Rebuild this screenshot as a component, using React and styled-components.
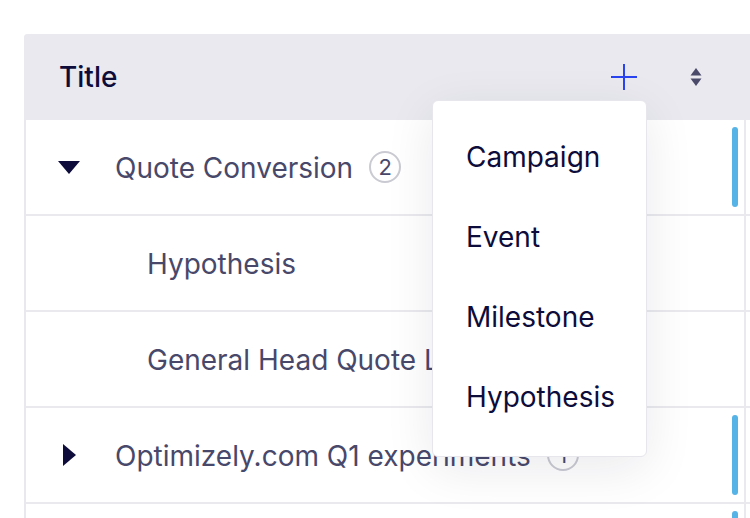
import React from "react";
import styled, { createGlobalStyle } from "styled-components";

const GlobalStyle = createGlobalStyle`
  html, body {
    margin: 0;
    padding: 0;
    background: #ffffff;
    overflow: hidden;
  }
  body {
    font-family: Inter, "Noto Sans", "Liberation Sans", sans-serif;
  }
`;

const rows = [
  { title: "Quote Conversion", count: 2, open: true, bar: true },
  { title: "Hypothesis", child: true },
  { title: "General Head Quote Lines", child: true },
  { title: "Optimizely.com Q1 experiments", count: 1, open: false, bar: true },
  { title: "", bar: true },
];

const menuItems = ["Campaign", "Event", "Milestone", "Hypothesis"];

const App = () => {
  return (
    <>
      <GlobalStyle />
      <Page>
        <Table>
          <HeaderRow>
            <HeaderTitleCell>
              <HeaderLabel>Title</HeaderLabel>
              <HeaderActions>
                <AddWrap>
                  <IconButton aria-label="Add">
                    <svg width="26" height="26" viewBox="0 0 26 26">
                      <path d="M13 0v26M0 13h26" stroke="#2b44f2" strokeWidth="2" fill="none" />
                    </svg>
                  </IconButton>
                  <Menu>
                    {menuItems.map((item) => (
                      <MenuItem key={item}>{item}</MenuItem>
                    ))}
                  </Menu>
                </AddWrap>
                <SortIcon aria-label="Sort">
                  <svg width="12" height="20" viewBox="0 0 12 20">
                    <path d="M6 1L11.5 8.5H0.5Z" fill="#4b4a6b" />
                    <path d="M6 19L11.5 11.5H0.5Z" fill="#4b4a6b" />
                  </svg>
                </SortIcon>
              </HeaderActions>
            </HeaderTitleCell>
            <HeaderRest />
          </HeaderRow>

          {rows.map((row, i) => (
            <Row key={i}>
              <TitleCell $child={row.child}>
                {!row.child && row.title && (
                  <Caret>
                    {row.open ? (
                      <svg width="22" height="13" viewBox="0 0 22 13">
                        <path d="M0 0H22L11 13Z" fill="#0d0c3a" />
                      </svg>
                    ) : (
                      <svg width="13" height="22" viewBox="0 0 13 22">
                        <path d="M0 0V22L13 11Z" fill="#0d0c3a" />
                      </svg>
                    )}
                  </Caret>
                )}
                <RowText>{row.title}</RowText>
                {row.count && <Badge>{row.count}</Badge>}
                <Spacer />
                {row.bar && <StatusBar />}
              </TitleCell>
              <RestCell />
            </Row>
          ))}
        </Table>
      </Page>
    </>
  );
};

export default App;

const Page = styled.div`
  padding: 34px 0 0 24px;
  width: 780px;
  height: 518px;
  box-sizing: border-box;
`;

const Table = styled.div`
  display: flex;
  flex-direction: column;
  border-left: 2px solid #e8e8ee;
  border-top-left-radius: 4px;
`;

const HeaderRow = styled.div`
  display: flex;
  flex-shrink: 0;
  height: 86px;
  margin-left: -2px;
  padding-left: 2px;
  background: #e9e9ef;
  border-top-left-radius: 4px;
`;

const HeaderTitleCell = styled.div`
  width: 720px;
  display: flex;
  align-items: center;
  padding: 0 44px 0 33px;
  box-sizing: border-box;
`;

const HeaderLabel = styled.div`
  font-size: 28px;
  font-weight: 500;
  color: #0d0c3a;
  flex: 1;
`;

const HeaderActions = styled.div`
  display: flex;
  align-items: center;
  gap: 53px;
`;

const AddWrap = styled.div`
  position: relative;
  display: flex;
`;

const IconButton = styled.button`
  border: none;
  background: none;
  padding: 0;
  width: 26px;
  height: 26px;
  display: flex;
  cursor: pointer;
`;

const SortIcon = styled.div`
  width: 12px;
  height: 20px;
  display: flex;
`;

const Menu = styled.div`
  position: absolute;
  top: 36px;
  right: -10px;
  width: 215px;
  padding: 16px 0 19px;
  box-sizing: border-box;
  background: #ffffff;
  border: 1px solid #e6e6ec;
  border-radius: 6px;
  box-shadow: 0 12px 50px rgba(20, 20, 50, 0.09);
  z-index: 10;
`;

const MenuItem = styled.div`
  height: 80px;
  display: flex;
  align-items: center;
  padding-left: 33px;
  font-size: 28px;
  color: #0d0c3a;
  white-space: nowrap;
`;

const HeaderRest = styled.div`
  flex: 1;
`;

const Row = styled.div`
  display: flex;
  flex-shrink: 0;
  height: 96px;
  border-bottom: 2px solid #e9e9ee;
  box-sizing: border-box;
`;

const TitleCell = styled.div`
  width: 720px;
  display: flex;
  align-items: center;
  padding: 0 6px 0 ${(p) => (p.$child ? "121px" : "32px")};
  box-sizing: border-box;
  border-right: 2px solid #e9e9ee;
  overflow: hidden;
`;

const Caret = styled.div`
  width: 22px;
  margin-right: 35px;
  display: flex;
  justify-content: center;
`;

const RowText = styled.div`
  font-size: 28px;
  color: #48486a;
  white-space: nowrap;
  padding-top: 2px;
`;

const Badge = styled.div`
  margin-left: 16px;
  width: 32px;
  height: 32px;
  box-sizing: border-box;
  border: 2px solid #cacad3;
  border-radius: 50%;
  display: flex;
  align-items: center;
  justify-content: center;
  font-size: 22px;
  color: #48486a;
`;

const Spacer = styled.div`
  flex: 1;
`;

const StatusBar = styled.div`
  width: 6px;
  height: 80px;
  border-radius: 3px;
  background: #56b3e6;
`;

const RestCell = styled.div`
  flex: 1;
`;
